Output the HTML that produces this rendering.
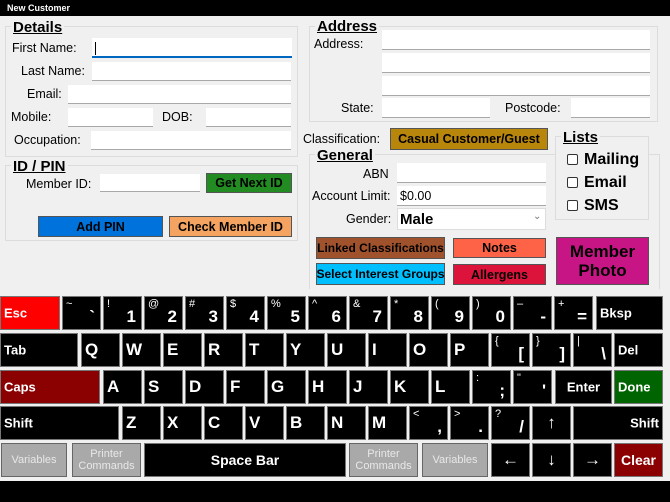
<!DOCTYPE html>
<html><head><meta charset="utf-8"><style>
*{box-sizing:border-box;margin:0;padding:0}
body{width:670px;height:502px;background:#000;position:relative;overflow:hidden;font-family:"Liberation Sans",Arial,sans-serif;font-size:12px;color:#000}
.a{position:absolute;white-space:nowrap}
#form{left:0;top:16px;width:670px;height:277px;background:#f0f0f0}
.g{position:absolute;border:1px solid #dcdcdc}
.gt{position:absolute;font-weight:bold;font-size:15px;text-decoration:underline;background:#f0f0f0;padding:0 2px;line-height:15px;white-space:nowrap}
.l{position:absolute;font-size:12.5px;line-height:15px;white-space:nowrap}
.i{position:absolute;background:#fff;border-bottom:1px solid #a8a8a8}
.b{position:absolute;border:1px solid #555;font-weight:bold;font-size:12.5px;display:flex;align-items:center;justify-content:center;text-align:center;white-space:nowrap}
.cb{position:absolute;width:11px;height:11px;border:1px solid #333;background:#fff;border-radius:2px}
.ct{position:absolute;font-weight:bold;font-size:16px;line-height:18px;white-space:nowrap}
#kb{left:0;top:293px;width:670px;height:188px;background:#f0f0f0}
.k{position:absolute;background:#000;color:#fff;border:1px solid #777;font-weight:bold;white-space:nowrap}
.k .s{position:absolute;left:3px;top:1px;font-size:11px;font-weight:normal}
.k .m{position:absolute;right:5px;bottom:2px;font-size:17px}
.k .c{position:absolute;left:3px;top:50%;transform:translateY(-50%);font-size:17px}
.k .w{position:absolute;left:3px;top:50%;transform:translateY(-50%);font-size:13px}
.k .z{position:absolute;left:0;right:0;top:50%;transform:translateY(-50%);text-align:center;font-size:13px}
.gr{background:#a9a9a9;color:#e8e8e8;border-color:#666}
.gr .z{font-size:11px;font-weight:normal;line-height:12px}
#wrap,#keys{left:0;top:0;width:670px;height:502px}
</style></head><body>
<div class="a" style="left:7px;top:3px;color:#fff;font-size:9px;font-weight:bold">New Customer</div>
<div id="form" class="a"></div>
<div id="wrap" class="a">
<div class="g" style="left:5px;top:26px;width:293px;height:131px"></div>
<div class="gt" style="left:11px;top:20px">Details</div>
<div class="l" style="left:12px;top:41px">First Name:</div>
<div class="i" style="left:92px;top:38px;width:200px;height:20px;border-bottom:2px solid #0067c0"></div>
<div class="a" style="left:95px;top:42px;width:1px;height:13px;background:#000"></div>
<div class="l" style="left:21px;top:64px">Last Name:</div>
<div class="i" style="left:92px;top:62px;width:199px;height:19px"></div>
<div class="l" style="left:27px;top:87px">Email:</div>
<div class="i" style="left:68px;top:85px;width:223px;height:19px"></div>
<div class="l" style="left:11px;top:110px">Mobile:</div>
<div class="i" style="left:68px;top:108px;width:85px;height:19px"></div>
<div class="l" style="left:162px;top:110px">DOB:</div>
<div class="i" style="left:206px;top:108px;width:85px;height:19px"></div>
<div class="l" style="left:14px;top:133px">Occupation:</div>
<div class="i" style="left:91px;top:131px;width:200px;height:19px"></div>
<div class="g" style="left:5px;top:165px;width:293px;height:76px"></div>
<div class="gt" style="left:11px;top:159px">ID / PIN</div>
<div class="l" style="left:26px;top:177px">Member ID:</div>
<div class="i" style="left:100px;top:174px;width:100px;height:18px"></div>
<div class="b" style="left:206px;top:173px;width:86px;height:20px;background:#228b22">Get Next ID</div>
<div class="b" style="left:38px;top:216px;width:125px;height:21px;background:#0072dc">Add PIN</div>
<div class="b" style="left:169px;top:216px;width:123px;height:21px;background:#f4a460">Check Member ID</div>

<div class="g" style="left:309px;top:26px;width:349px;height:96px"></div>
<div class="gt" style="left:315px;top:19px">Address</div>
<div class="l" style="left:314px;top:37px">Address:</div>
<div class="i" style="left:382px;top:30px;width:268px;height:20px"></div>
<div class="i" style="left:382px;top:53px;width:268px;height:20px"></div>
<div class="i" style="left:382px;top:76px;width:268px;height:20px"></div>
<div class="l" style="left:341px;top:101px">State:</div>
<div class="i" style="left:382px;top:98px;width:108px;height:20px"></div>
<div class="l" style="left:505px;top:101px">Postcode:</div>
<div class="i" style="left:571px;top:98px;width:79px;height:20px"></div>

<div class="l" style="left:303px;top:132px">Classification:</div>
<div class="b" style="left:390px;top:128px;width:158px;height:22px;background:#b8860b">Casual Customer/Guest</div>
<div class="g" style="left:309px;top:154px;width:351px;height:135px;border-bottom:none"></div>
<div class="gt" style="left:315px;top:148px">General</div>
<div class="l" style="left:363px;top:167px">ABN</div>
<div class="i" style="left:397px;top:163px;width:149px;height:20px"></div>
<div class="l" style="left:312px;top:189px">Account Limit:</div>
<div class="i" style="left:397px;top:186px;width:149px;height:20px"></div>
<div class="l" style="left:400px;top:189px">$0.00</div>
<div class="l" style="left:346px;top:212px">Gender:</div>
<div class="i" style="left:397px;top:208px;width:149px;height:22px;border:1px solid #ddd"></div>
<div class="a" style="left:400px;top:211px;font-size:15px;font-weight:bold">Male</div>
<div class="a" style="left:533px;top:211px;font-size:10px;color:#777">&#8964;</div>
<div class="b" style="left:316px;top:237px;width:129px;height:22px;background:#a0522d;font-size:12px">Linked Classifications</div>
<div class="b" style="left:453px;top:238px;width:93px;height:20px;background:#ff6347">Notes</div>
<div class="b" style="left:316px;top:263px;width:129px;height:22px;background:#00bfff;font-size:12px">Select Interest Groups</div>
<div class="b" style="left:453px;top:264px;width:93px;height:21px;background:#dc143c">Allergens</div>
<div class="b" style="left:556px;top:237px;width:93px;height:48px;background:#c71585;font-size:17px;line-height:19px">Member<br>Photo</div>

<div class="g" style="left:555px;top:136px;width:94px;height:84px;background:#f0f0f0"></div>
<div class="gt" style="left:561px;top:130px">Lists</div>
<div class="cb" style="left:567px;top:154px"></div><div class="ct" style="left:584px;top:151px">Mailing</div>
<div class="cb" style="left:567px;top:177px"></div><div class="ct" style="left:584px;top:174px">Email</div>
<div class="cb" style="left:567px;top:200px"></div><div class="ct" style="left:584px;top:197px">SMS</div>
</div>

<div id="kb" class="a"></div>
<div id="keys" class="a"></div>
<script>
var H='';
function k(x,y,w,cls,html,bg){H+='<div class="k '+(cls||'')+'" style="left:'+x+'px;top:'+y+'px;width:'+w+'px;height:34px'+(bg?';background:'+bg:'')+'">'+html+'</div>';}
var y1=296,y2=333,y3=370,y4=406,y5=443;
k(0,y1,60,'','<span class="w">Esc</span>','#f00');
var r1=[['~','`'],['!','1'],['@','2'],['#','3'],['$','4'],['%','5'],['^','6'],['&amp;','7'],['*','8'],['(','9'],[')','0'],['\u2013','-'],['+','=']];
r1.forEach(function(p,i){k(62+41*i,y1,39,'','<span class="s">'+p[0]+'</span><span class="m">'+p[1]+'</span>');});
k(596,y1,67,'','<span class="w">Bksp</span>');
k(0,y2,78,'','<span class="w">Tab</span>');
'QWERTYUIOP'.split('').forEach(function(c,i){k(81+41*i,y2,39,'','<span class="c">'+c+'</span>');});
[['{','['],['}',']'],['|','\\']].forEach(function(p,i){k(491+41*i,y2,39,'','<span class="s">'+p[0]+'</span><span class="m">'+p[1]+'</span>');});
k(614,y2,49,'','<span class="w">Del</span>');
k(0,y3,100,'','<span class="w">Caps</span>','#8b0000');
'ASDFGHJKL'.split('').forEach(function(c,i){k(103+41*i,y3,39,'','<span class="c">'+c+'</span>');});
[[':',';'],['"',"'"]].forEach(function(p,i){k(472+41*i,y3,39,'','<span class="s">'+p[0]+'</span><span class="m">'+p[1]+'</span>');});
k(555,y3,57,'','<span class="z">Enter</span>');
k(614,y3,49,'','<span class="w">Done</span>','#006400');
k(0,y4,119,'','<span class="w">Shift</span>');
'ZXCVBNM'.split('').forEach(function(c,i){k(122+41*i,y4,39,'','<span class="c">'+c+'</span>');});
[['&lt;',','],['&gt;','.'],['?','/']].forEach(function(p,i){k(409+41*i,y4,39,'','<span class="s">'+p[0]+'</span><span class="m">'+p[1]+'</span>');});
k(532,y4,39,'','<span class="z" style="font-size:17px;font-weight:normal">\u2191</span>');
k(573,y4,90,'','<span class="w" style="left:auto;right:3px">Shift</span>');
k(1,y5,66,'gr','<span class="z">Variables</span>');
k(72,y5,69,'gr','<span class="z">Printer<br>Commands</span>');
k(144,y5,202,'','<span class="z" style="font-size:14px">Space Bar</span>');
k(349,y5,69,'gr','<span class="z">Printer<br>Commands</span>');
k(422,y5,66,'gr','<span class="z">Variables</span>');
k(491,y5,39,'','<span class="z" style="font-size:17px;font-weight:normal">\u2190</span>');
k(532,y5,39,'','<span class="z" style="font-size:17px;font-weight:normal">\u2193</span>');
k(573,y5,39,'','<span class="z" style="font-size:17px;font-weight:normal">\u2192</span>');
k(614,y5,49,'','<span class="z" style="font-size:14px">Clear</span>','#8b0000');
document.getElementById('keys').innerHTML=H;
</script>
</body></html>
